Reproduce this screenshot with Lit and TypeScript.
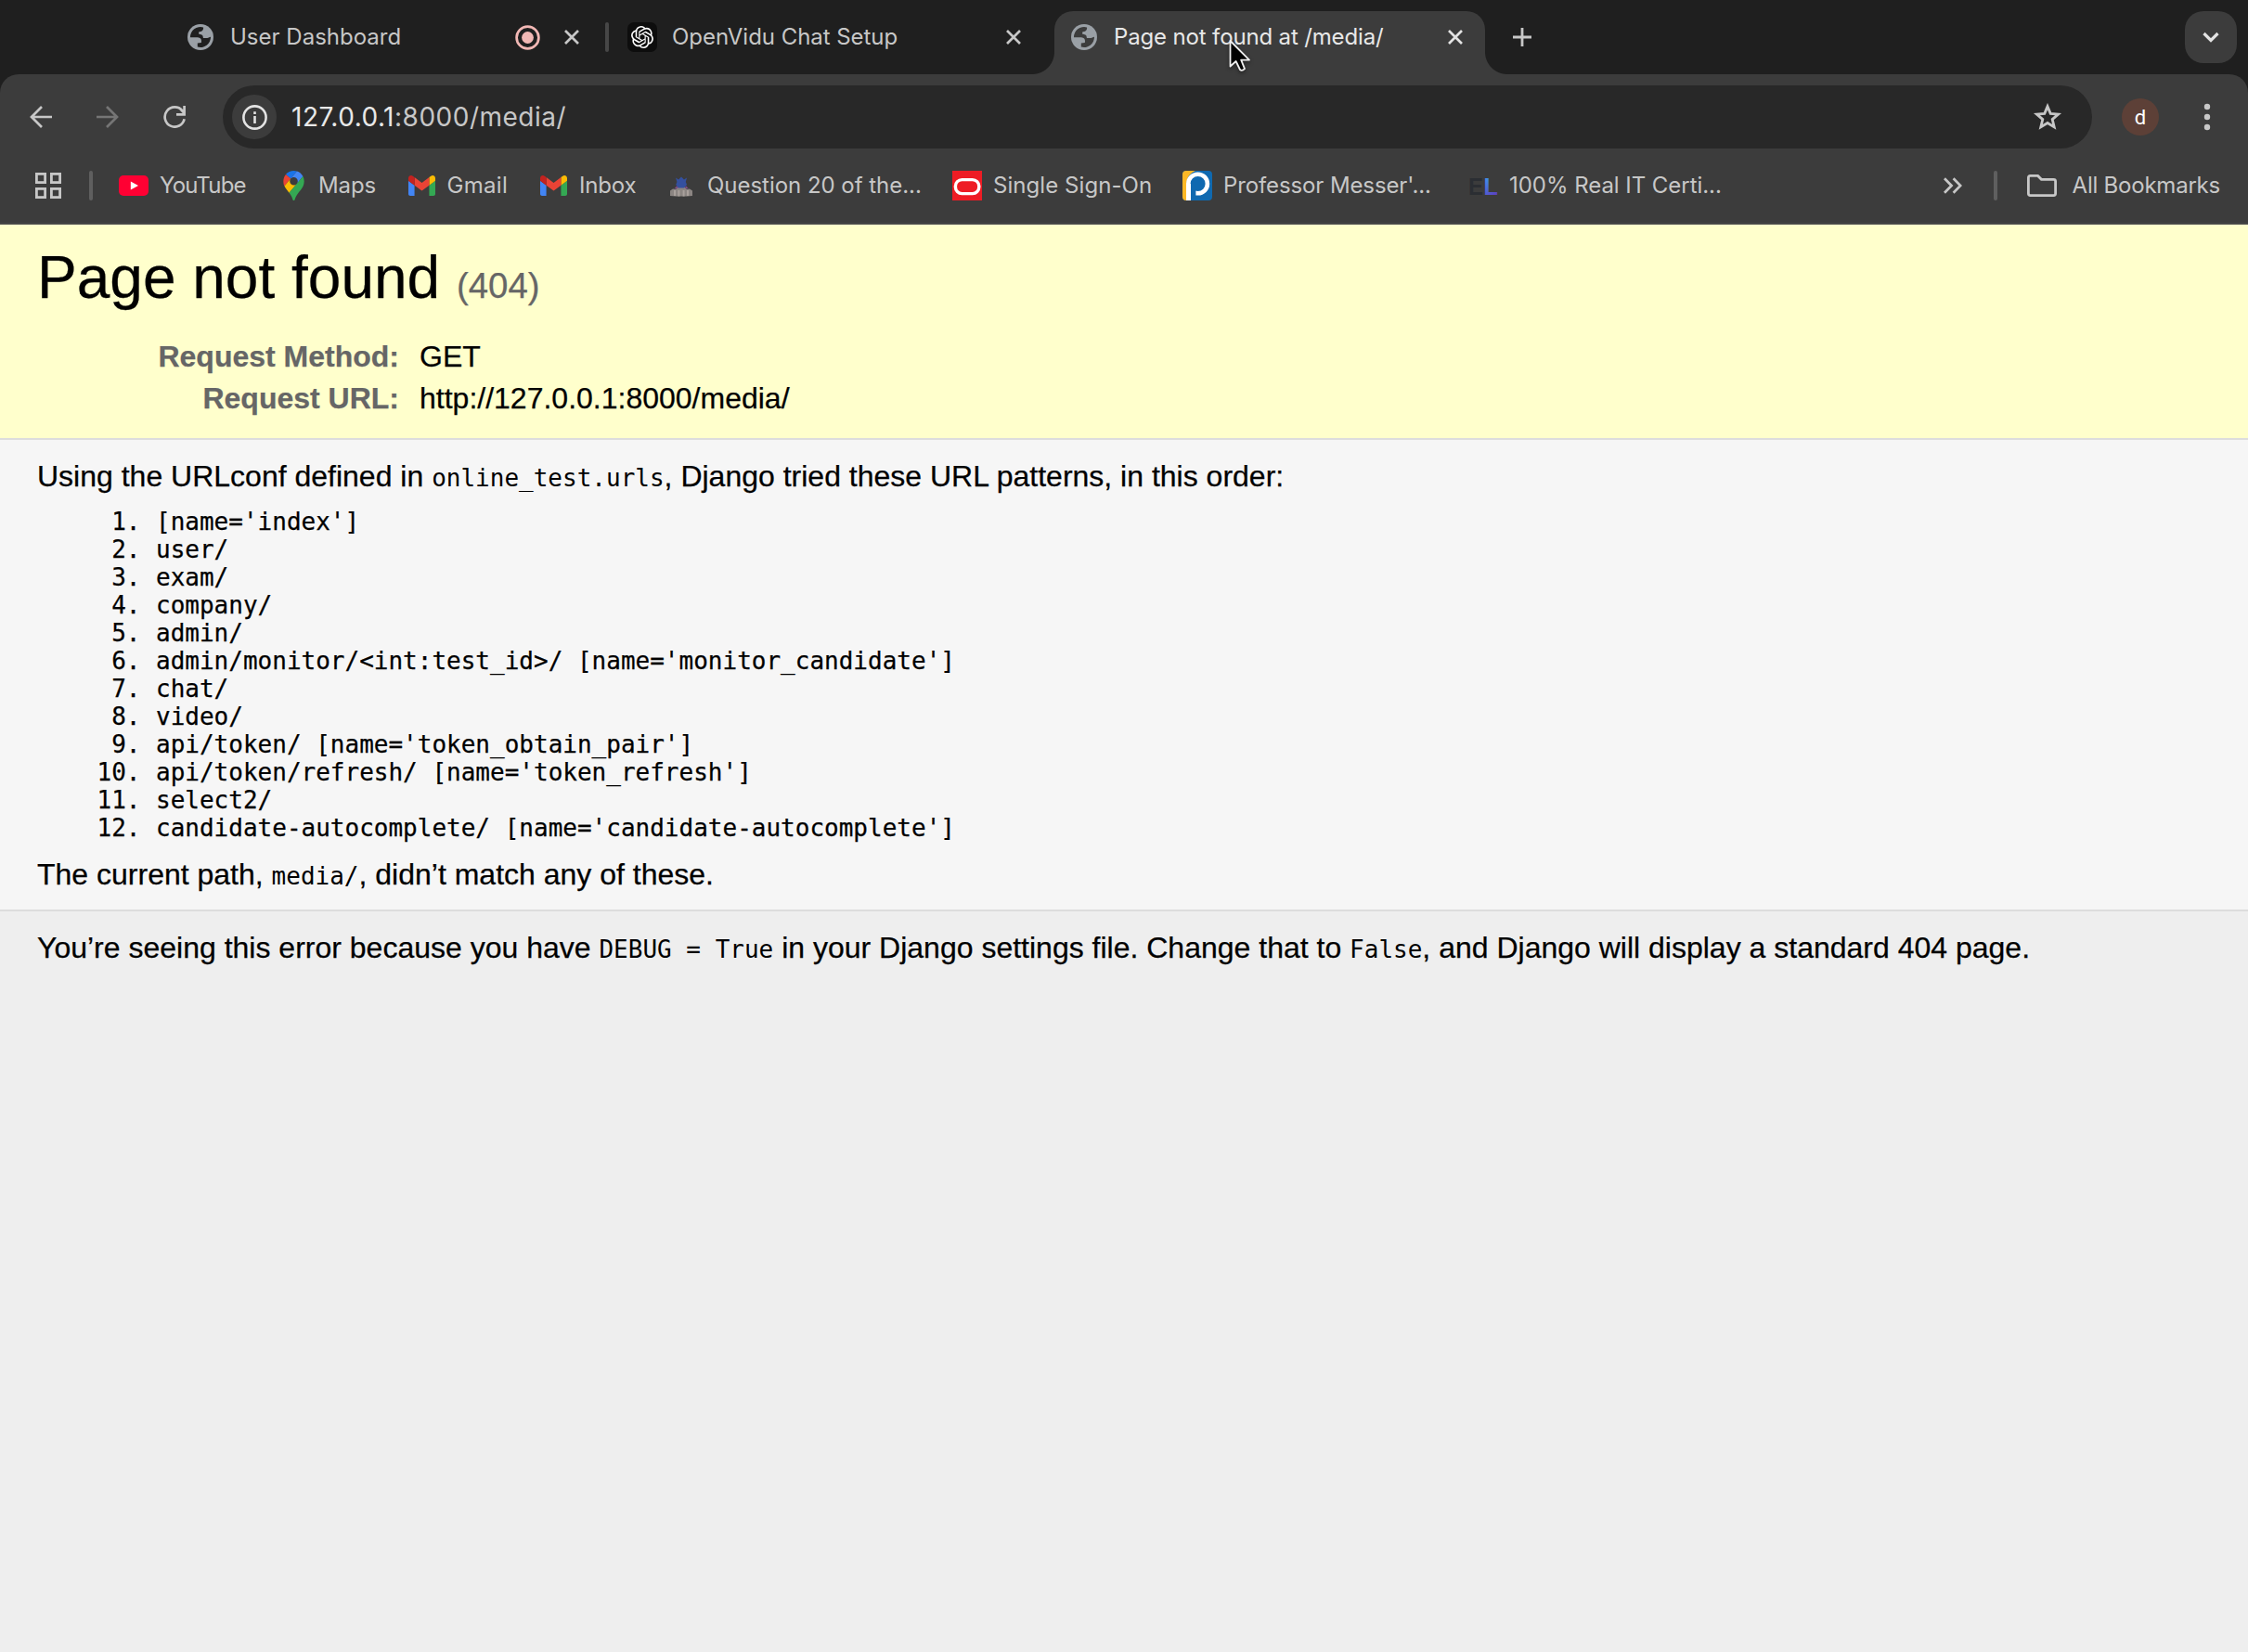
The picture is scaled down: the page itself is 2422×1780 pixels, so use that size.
import { LitElement, html, css, nothing } from "lit";
import { customElement, property } from "lit/decorators.js";
import { styleMap } from "lit/directives/style-map.js";

const UI_FONT = 'Inter, "Liberation Sans", sans-serif';
const measureCtx = document.createElement("canvas").getContext("2d")!;

/** Text run whose tracking is computed so that it spans a given width. */
@customElement("fit-label")
class FitLabel extends LitElement {
  @property() text = "";
  @property() lead = "";
  @property({ type: Number }) span = 0;
  @property({ type: Number }) size = 24;

  static styles = css`
    :host {
      display: block;
      flex: none;
      white-space: pre;
      font-family: Inter, "Liberation Sans", sans-serif;
      color: #c7c7c7;
    }
    .lead {
      color: #e8e8e8;
    }
  `;

  render() {
    const full = this.lead + this.text;
    measureCtx.font = `${this.size}px ${UI_FONT}`;
    const m = measureCtx.measureText(full);
    const ink = m.actualBoundingBoxRight + m.actualBoundingBoxLeft;
    const tracking = (this.span - ink) / Math.max(1, full.length - 1);
    const style = {
      fontSize: `${this.size}px`,
      letterSpacing: `${tracking.toFixed(3)}px`,
      marginLeft: `${m.actualBoundingBoxLeft.toFixed(2)}px`,
    };
    return html`<div class="run" style=${styleMap(style)}>${this.lead ? html`<span class="lead">${this.lead}</span>` : nothing}${this.text}</div>`;
  }
}

const globe = html`<svg width="28" height="28" viewBox="0 0 28 28">
  <circle cx="14" cy="14" r="14" fill="#9aa0a6" />
  <path class="sea" d="M3 14.3A11 11 0 0 1 17 3.4C17.6 6.6 15.6 8 12.4 8.2L12 10.6C14.6 11.4 16.4 11.4 16.6 13.2L17 15H21.4C22.4 15 23.4 14.2 25 13.8A11 11 0 0 1 10.8 24.6V20.4L14.8 20C15.4 16.8 14.8 14.8 11 14.3Z" />
</svg>`;

const closeX = html`<svg width="20" height="20" viewBox="0 0 20 20">
  <path d="M3 3L17 17M17 3L3 17" stroke="currentColor" stroke-width="2.7" fill="none" />
</svg>`;

const openai = html`<svg width="24" height="24" viewBox="0 0 24 24"><path fill="#fff" d="M22.2819 9.8211a5.9847 5.9847 0 0 0-.5157-4.9108 6.0462 6.0462 0 0 0-6.5098-2.9A6.0651 6.0651 0 0 0 4.9807 4.1818a5.9847 5.9847 0 0 0-3.9977 2.9 6.0462 6.0462 0 0 0 .7427 7.0966 5.98 5.98 0 0 0 .511 4.9107 6.051 6.051 0 0 0 6.5146 2.9001A5.9847 5.9847 0 0 0 13.2599 24a6.0557 6.0557 0 0 0 5.7718-4.2058 5.9894 5.9894 0 0 0 3.9977-2.9001 6.0557 6.0557 0 0 0-.7475-7.0729zm-9.022 12.6081a4.4755 4.4755 0 0 1-2.8764-1.0408l.1419-.0804 4.7783-2.7582a.7948.7948 0 0 0 .3927-.6813v-6.7369l2.02 1.1686a.071.071 0 0 1 .038.052v5.5826a4.504 4.504 0 0 1-4.4945 4.4944zm-9.6607-4.1254a4.4708 4.4708 0 0 1-.5346-3.0137l.142.0852 4.783 2.7582a.7712.7712 0 0 0 .7806 0l5.8428-3.3685v2.3324a.0804.0804 0 0 1-.0332.0615L9.74 19.9502a4.4992 4.4992 0 0 1-6.1408-1.6464zM2.3408 7.8956a4.485 4.485 0 0 1 2.3655-1.9728V11.6a.7664.7664 0 0 0 .3879.6765l5.8144 3.3543-2.0201 1.1685a.0757.0757 0 0 1-.071 0l-4.8303-2.7865A4.504 4.504 0 0 1 2.3408 7.872zm16.5963 3.8558L13.1038 8.364 15.1192 7.2a.0757.0757 0 0 1 .071 0l4.8303 2.7913a4.4944 4.4944 0 0 1-.6765 8.1042v-5.6772a.79.79 0 0 0-.407-.667zm2.0107-3.0231l-.142-.0852-4.7735-2.7818a.7759.7759 0 0 0-.7854 0L9.409 9.2297V6.8974a.0662.0662 0 0 1 .0284-.0615l4.8303-2.7866a4.4992 4.4992 0 0 1 6.6802 4.66zM8.3065 12.863l-2.02-1.1638a.0804.0804 0 0 1-.038-.0567V6.0742a4.4992 4.4992 0 0 1 7.3757-3.4537l-.142.0805L8.704 5.459a.7948.7948 0 0 0-.3927.6813zm1.0976-2.3654l2.602-1.4998 2.6069 1.4998v2.9994l-2.5974 1.4997-2.6067-1.4997Z" /></svg>`;

const youtube = html`<svg width="32" height="22" viewBox="0 0 32 22">
  <rect width="32" height="22" rx="5" fill="#ff0033" /><path d="M12.8 6.4L21 11L12.8 15.6Z" fill="#fff" />
</svg>`;

const maps = html`<svg width="23" height="32" viewBox="0 0 92.3 132.3">
  <path fill="#1a73e8" d="M60.2 2.2C55.8.8 51 0 46.1 0 32 0 19.3 6.4 10.8 16.5l21.8 18.3L60.2 2.2z" />
  <path fill="#ea4335" d="M10.8 16.5C4.1 24.5 0 34.9 0 46.1c0 8.7 1.7 15.7 4.6 22l28-33.3-21.8-18.3z" />
  <path fill="#4285f4" d="M46.2 28.5c9.8 0 17.7 7.9 17.7 17.7 0 4.3-1.6 8.3-4.2 11.4 0 0 13.9-16.6 27.5-32.7-5.6-10.8-15.3-19-27-22.7L32.6 34.8c3.3-3.8 8.1-6.3 13.6-6.3" />
  <path fill="#fbbc04" d="M46.2 63.8c-9.8 0-17.7-7.9-17.7-17.7 0-4.3 1.5-8.3 4.1-11.3l-28 33.3c4.8 10.6 12.8 19.2 21 29.9l34.1-40.5c-3.3 3.9-8.1 6.3-13.5 6.3" />
  <path fill="#34a853" d="M59.1 109.2c15.4-24.1 33.3-35 33.3-63 0-7.7-1.9-14.9-5.2-21.3L25.6 98c2.6 3.4 5.3 7.3 7.9 11.3 9.4 14.5 6.8 23.1 12.8 23.1s3.4-8.7 12.8-23.2" />
</svg>`;

const gmail = html`<svg width="29" height="22" viewBox="52 42 88 66">
  <path fill="#4285f4" d="M58 108h14V74L52 59v43c0 3.32 2.69 6 6 6" />
  <path fill="#34a853" d="M120 108h14c3.32 0 6-2.69 6-6V59l-20 15" />
  <path fill="#fbbc04" d="M120 48v26l20-15v-8c0-7.42-8.47-11.65-14.4-7.2" />
  <path fill="#ea4335" d="M72 74V48l24 18 24-18v26L96 92" />
  <path fill="#c5221f" d="M52 51v8l20 15V48l-5.6-4.4c-5.94-4.45-14.4-.22-14.4 7.2" />
</svg>`;

const statue = html`<svg width="32" height="32" viewBox="0 0 32 32">
  <path d="M4 27V21.5L7 19.5L10 20L13 17H19L22 20L25 19.5L28 21.5V27L22 27.6H10Z" fill="#8b8582" />
  <path d="M9 21V27M13.4 21V27.6M18.6 21V27.6M23 21V27" stroke="#a9a19c" stroke-width="2" />
  <path d="M8.4 19.4L11.4 16L12.6 19Z M20 19L20.8 16L24 19.4Z" fill="#7d4f86" />
  <path d="M10 7.4L13 9.6L16 6.6L19 9.6L22 7.4L20.8 12L22 15L19 18.4H13L10.2 15L11.4 12Z" fill="#34509f" />
</svg>`;

const oracle = html`<svg width="32" height="32" viewBox="0 0 32 32">
  <rect width="32" height="32" fill="#ee1c24" />
  <rect x="3.400" y="9.600" width="25.400" height="15" rx="7" fill="none" stroke="#fff" stroke-width="3.400" />
</svg>`;

const messer = html`<svg width="32" height="32" viewBox="0 0 32 32">
  <defs><clipPath id="badge"><rect width="32" height="32" rx="4" /></clipPath></defs>
  <g clip-path="url(#badge)">
    <rect width="32" height="32" fill="#0f69b0" />
    <path d="M0 0H14C7 3 4.400 8 4.400 15V32H0Z" fill="#fcb826" />
    <rect x="4" y="14" width="5" height="18" fill="#fff" />
    <circle cx="16.600" cy="14" r="10.300" fill="none" stroke="#fff" stroke-width="4.600" />
    <rect x="9" y="15" width="5.400" height="17" fill="#0f69b0" />
  </g>
</svg>`;

const examlabs = html`<svg width="32" height="32" viewBox="0 0 32 32">
  <defs><linearGradient id="el" x1="0" y1="0" x2="0.400" y2="1"><stop offset="0.200" stop-color="#3f93ea" /><stop offset="1" stop-color="#5b3fc0" /></linearGradient></defs>
  <text x="0" y="26" font-family="Liberation Sans, sans-serif" font-weight="700" font-size="26" textLength="16" lengthAdjust="spacingAndGlyphs" fill="#2b2e33">E</text>
  <text x="16.600" y="26" font-family="Liberation Sans, sans-serif" font-weight="700" font-size="26" textLength="15.400" lengthAdjust="spacingAndGlyphs" fill="url(#el)">L</text>
</svg>`;

interface Bookmark {
  title: string;
  icon: unknown;
  ink: number;
  cell: number;
  gap: number;
}

const bookmarks: Bookmark[] = [
  { title: "YouTube", icon: youtube, ink: 92.5, cell: 172, gap: 12 },
  { title: "Maps", icon: maps, ink: 59.5, cell: 138, gap: 13 },
  { title: "Gmail", icon: gmail, ink: 62.5, cell: 142, gap: 12.5 },
  { title: "Inbox", icon: gmail, ink: 59.5, cell: 138, gap: 14 },
  { title: "Question 20 of the...", icon: statue, ink: 229, cell: 308, gap: 13 },
  { title: "Single Sign-On", icon: oracle, ink: 169, cell: 248, gap: 13 },
  { title: "Professor Messer'...", icon: messer, ink: 221, cell: 308, gap: 14 },
  { title: "100% Real IT Certi...", icon: examlabs, ink: 227, cell: 280, gap: 13 },
];

const patterns = [
  "[name='index']",
  "user/",
  "exam/",
  "company/",
  "admin/",
  "admin/monitor/<int:test_id>/ [name='monitor_candidate']",
  "chat/",
  "video/",
  "api/token/ [name='token_obtain_pair']",
  "api/token/refresh/ [name='token_refresh']",
  "select2/",
  "candidate-autocomplete/ [name='candidate-autocomplete']",
];

@customElement("browser-chrome")
class BrowserChrome extends LitElement {
  static styles = css`
    :host {
      display: block;
      background: #1f1f1f;
      color: #c7c7c7;
    }
    svg {
      display: block;
      flex: none;
    }
    .tabs {
      display: flex;
      height: 80px;
      padding-left: 200px;
    }
    .tab {
      display: flex;
      align-items: center;
      height: 80px;
      box-sizing: border-box;
      line-height: 32px;
    }
    .slot {
      width: 32px;
      height: 32px;
      display: flex;
      align-items: center;
      justify-content: center;
      flex: none;
    }
    .grow {
      flex: 1;
    }
    .dash {
      width: 452px;
      padding-right: 26px;
      --sea: #1f1f1f;
    }
    .chat {
      width: 480px;
      padding: 0 34px 0 20px;
    }
    .dash fit-label {
      margin-left: 18px;
    }
    .chat fit-label {
      margin-left: 17px;
    }
    .sea {
      fill: var(--sea);
    }
    .rec {
      margin-right: 24px;
    }
    .divider {
      width: 4px;
      height: 32px;
      border-radius: 2px;
      background: #474747;
      flex: none;
      align-self: center;
    }
    .tile {
      border-radius: 7px;
      background: #0d0d0d;
    }
    .active {
      --sea: #3c3c3c;
      position: relative;
      width: 464px;
      height: 68px;
      margin-top: 12px;
      padding: 0 22px 12px 16px;
      background: #3c3c3c;
      border-radius: 20px 20px 0 0;
      color: #e3e3e3;
    }
    .active fit-label {
      margin-left: 18px;
    }
    .active::before,
    .active::after {
      content: "";
      position: absolute;
      bottom: 0;
      width: 24px;
      height: 24px;
    }
    .active::before {
      left: -24px;
      background: radial-gradient(circle at 0 0, transparent 23.5px, #3c3c3c 24.5px);
    }
    .active::after {
      right: -24px;
      background: radial-gradient(circle at 100% 0, transparent 23.5px, #3c3c3c 24.5px);
    }
    .pointer {
      position: absolute;
      left: 188px;
      top: 30px;
      filter: drop-shadow(0 2px 2px rgba(0, 0, 0, 0.4));
    }
    .plus {
      margin: 30px 0 0 30px;
    }
    .search-tabs {
      width: 56px;
      height: 56px;
      margin: 12px 12px 0 auto;
      border-radius: 20px;
      background: #3c3c3c;
      display: flex;
      align-items: center;
      justify-content: center;
    }
    .toolbar {
      display: flex;
      align-items: center;
      height: 92px;
      padding: 0 36px 0 32px;
      background: #3c3c3c;
      border-radius: 20px 20px 0 0;
    }
    .nav {
      width: 72px;
    }
    .omnibox {
      display: flex;
      align-items: center;
      width: 2014px;
      height: 68px;
      box-sizing: border-box;
      padding: 0 32px 0 10px;
      margin-left: -8px;
      border-radius: 34px;
      background: #282828;
      line-height: 36px;
    }
    .info {
      width: 48px;
      height: 48px;
      margin-right: 17px;
      border-radius: 50%;
      background: #3c3c3c;
      display: flex;
      align-items: center;
      justify-content: center;
    }
    .avatar {
      width: 40px;
      height: 40px;
      margin-left: 32px;
      border-radius: 50%;
      background: #5d4037;
      color: #fff;
      font: 22px/41px Roboto, "Liberation Sans", sans-serif;
      text-align: center;
    }
    .dots {
      margin-left: 48px;
    }
    .bookmarks {
      display: flex;
      align-items: center;
      height: 70px;
      padding: 0 30px 12px 38px;
      box-sizing: border-box;
      background: #3c3c3c;
      line-height: 32px;
      border-bottom: 2px solid #474747;
    }
    .bookmarks .divider {
      background: #5f5f5f;
    }
    .apps {
      margin-right: 30px;
    }
    .items {
      display: flex;
      margin-left: 28px;
    }
    .item {
      display: flex;
      align-items: center;
    }
    .more {
      margin: 0 34px 0 auto;
    }
    .folder {
      margin: 0 17px 0 32px;
    }
  `;

  render() {
    return html`
      <div class="tabs">
        <div class="tab dash">
          <div class="slot">${globe}</div>
          <fit-label text="User Dashboard" span="180.5"></fit-label>
          <div class="grow"></div>
          <svg class="rec" width="27" height="27" viewBox="0 0 27 27">
            <circle cx="13.500" cy="13.500" r="11.900" fill="none" stroke="#f2b8b5" stroke-width="2.700" />
            <circle cx="13.500" cy="13.500" r="6.400" fill="#f2b8b5" />
          </svg>
          ${closeX}
        </div>
        <div class="divider"></div>
        <div class="tab chat">
          <div class="slot tile">${openai}</div>
          <fit-label text="OpenVidu Chat Setup" span="241.5"></fit-label>
          <div class="grow"></div>
          ${closeX}
        </div>
        <div class="tab active">
          <div class="slot">${globe}</div>
          <fit-label lead="Page not found at /media/" span="289"></fit-label>
          <div class="grow"></div>
          ${closeX}
          <svg class="pointer" width="26" height="38" viewBox="0 0 26 38">
            <path d="M1.500 2V29.500L7.600 24L12 33Q14 35 17 32.200L13.200 22.600H22Z" fill="#000" stroke="#f0f0f0" stroke-width="1.800" stroke-linejoin="round" />
          </svg>
        </div>
        <svg class="plus" width="20" height="20" viewBox="0 0 20 20">
          <path d="M10 0V20M0 10H20" stroke="#c7c7c7" stroke-width="2.800" />
        </svg>
        <div class="search-tabs">
          <svg width="18" height="12" viewBox="0 0 18 12">
            <path d="M1.500 2L9 9.500L16.500 2" fill="none" stroke="#e3e3e3" stroke-width="3.200" />
          </svg>
        </div>
      </div>
      <div class="toolbar">
        <div class="nav">
          <svg width="24" height="24" viewBox="0 0 24 24">
            <path d="M24 12H2M13 1L2 12L13 23" fill="none" stroke="#c7c7c7" stroke-width="2.700" />
          </svg>
        </div>
        <div class="nav">
          <svg width="24" height="24" viewBox="0 0 24 24">
            <path d="M0 12H22M11 1L22 12L11 23" fill="none" stroke="#757575" stroke-width="2.700" />
          </svg>
        </div>
        <div class="nav">
          <svg width="24" height="24" viewBox="0 0 24 24">
            <path d="M20.500 5.400A10.600 10.600 0 1 0 22.600 14.200M22.600 0V9.400H14M22.600 8.200L18.600 3.600" fill="none" stroke="#c7c7c7" stroke-width="2.700" />
          </svg>
        </div>
        <div class="omnibox">
          <div class="info">
            <svg width="27" height="27" viewBox="0 0 27 27">
              <circle cx="13.500" cy="13.500" r="12.100" fill="none" stroke="#e3e3e3" stroke-width="2.600" />
              <path d="M13.500 12V20M13.500 7.200V9.900" stroke="#e3e3e3" stroke-width="2.600" />
            </svg>
          </div>
          <fit-label lead="127.0.0.1" text=":8000/media/" size="28" span="294.5"></fit-label>
          <div class="grow"></div>
          <svg width="32" height="30" viewBox="0 0 32 30">
            <path d="M16 3.600L19.200 11.400L27.600 12.100L21.200 17.600L23.200 25.900L16 21.500L8.800 25.900L10.800 17.600L4.400 12.100L12.800 11.400Z" fill="none" stroke="#c7c7c7" stroke-width="2.800" />
          </svg>
        </div>
        <div class="avatar">d</div>
        <svg class="dots" width="8" height="30" viewBox="0 0 8 30">
          <circle cx="4" cy="4" r="3.200" fill="#c7c7c7" /><circle cx="4" cy="15" r="3.200" fill="#c7c7c7" /><circle cx="4" cy="26" r="3.200" fill="#c7c7c7" />
        </svg>
      </div>
      <div class="bookmarks">
        <svg class="apps" width="28" height="28" viewBox="0 0 28 28">
          <g fill="none" stroke="#c7c7c7" stroke-width="2.800">
            <rect x="1.400" y="1.400" width="9.200" height="9.200" /><rect x="17.400" y="1.400" width="9.200" height="9.200" />
            <rect x="1.400" y="17.400" width="9.200" height="9.200" /><rect x="17.400" y="17.400" width="9.200" height="9.200" />
          </g>
        </svg>
        <div class="divider"></div>
        <div class="items">
          ${bookmarks.map(
            (b) => html`<div class="item" style=${styleMap({ width: `${b.cell}px`, gap: `${b.gap}px` })}>
              <div class="slot">${b.icon}</div>
              <fit-label .text=${b.title} .span=${b.ink}></fit-label>
            </div>`
          )}
        </div>
        <svg class="more" width="20" height="18" viewBox="0 0 20 18">
          <path d="M1 1.200L8.600 9L1 16.800M10.600 1.200L18.200 9L10.600 16.800" fill="none" stroke="#c7c7c7" stroke-width="2.700" />
        </svg>
        <div class="divider"></div>
        <svg class="folder" width="32" height="24" viewBox="0 0 32 24">
          <path d="M3.400 1.400H11.600L15.400 5.300H28.600Q30.600 5.300 30.600 7.300V20.600Q30.600 22.600 28.600 22.600H3.400Q1.400 22.600 1.400 20.600V3.400Q1.400 1.400 3.400 1.400Z" fill="none" stroke="#c7c7c7" stroke-width="2.800" />
        </svg>
        <fit-label text="All Bookmarks" span="159"></fit-label>
      </div>
    `;
  }
}

@customElement("error-page")
class ErrorPage extends LitElement {
  static styles = css`
    :host {
      display: block;
      background: #eee;
      color: #000;
      font: 32px/36px "Liberation Sans", Arial, sans-serif;
      white-space: nowrap;
      -webkit-text-stroke: 0.25px currentColor;
    }
    .summary {
      height: 230px;
      padding: 21px 40px 0;
      box-sizing: border-box;
      background: #ffffcc;
    }
    h1 {
      margin: 0 0 27px;
      font-size: 64px;
      line-height: 72px;
      font-weight: 400;
    }
    .code {
      font-size: 38.4px;
      line-height: 1px;
      color: #666;
    }
    .meta {
      display: grid;
      grid-template-columns: 390px auto;
      column-gap: 22px;
      line-height: 45px;
    }
    .key {
      color: #666;
      font-weight: 700;
      text-align: right;
    }
    .info {
      height: 510px;
      padding: 21px 40px 0;
      box-sizing: border-box;
      background: #f6f6f6;
      border-top: 2px solid #ddd;
      border-bottom: 2px solid #ddd;
    }
    p {
      margin: 0;
    }
    code,
    .patterns {
      font-family: "DejaVu Sans Mono", monospace;
      font-size: 26px;
    }
    code {
      line-height: 1px;
      -webkit-text-stroke: 0;
    }
    .patterns {
      display: grid;
      grid-template-columns: 111.5px auto;
      column-gap: 16.5px;
      margin: 16px 0 17px;
      line-height: 30px;
    }
    .num {
      text-align: right;
    }
    .explain {
      padding: 21px 40px 0;
    }
  `;

  render() {
    return html`
      <div class="summary">
        <h1>Page not found <span class="code">(404)</span></h1>
        <div class="meta">
          <div class="key">Request Method:</div>
          <div class="value">GET</div>
          <div class="key">Request URL:</div>
          <div class="value">http://127.0.0.1:8000/media/</div>
        </div>
      </div>
      <div class="info">
        <p>Using the URLconf defined in <code>online_test.urls</code>, Django tried these URL patterns, in this order:</p>
        <div class="patterns">
          ${patterns.map((p, i) => html`<div class="num">${i + 1}.</div><div>${p}</div>`)}
        </div>
        <p>The current path, <code>media/</code>, didn’t match any of these.</p>
      </div>
      <div class="explain">
        <p>You’re seeing this error because you have <code>DEBUG = True</code> in your Django settings file. Change that to <code>False</code>, and Django will display a standard 404 page.</p>
      </div>
    `;
  }
}

@customElement("app-root")
class AppRoot extends LitElement {
  static styles = css`
    :host {
      display: flex;
      flex-direction: column;
      width: 2422px;
      height: 1780px;
      overflow: hidden;
      background: #eee;
    }
    error-page {
      flex: 1;
    }
  `;

  render() {
    return html`<browser-chrome></browser-chrome><error-page></error-page>`;
  }
}
